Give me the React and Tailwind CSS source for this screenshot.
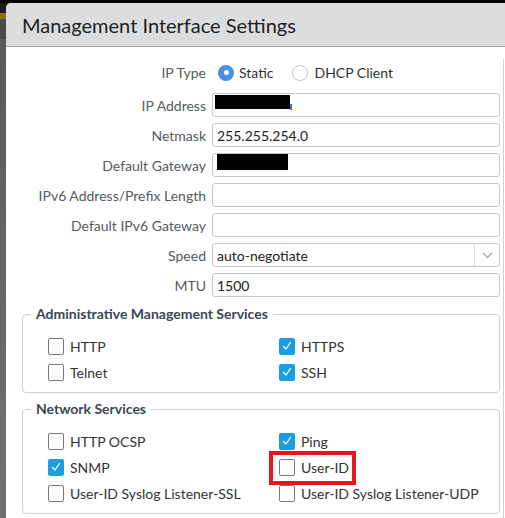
import React from 'react';

const Check = () => (
    <svg width="12" height="12" viewBox="0 0 12 12" fill="none">
        <path d="M2.5 6.5 L5 9 L9.5 2.5" stroke="white" strokeWidth="1.3" strokeLinecap="round" strokeLinejoin="round" />
    </svg>
);

const Box = ({ checked }) =>
    checked ? (
        <span className="w-[16px] h-[17px] rounded-[2px] bg-[#1c9de2] flex items-center justify-center shrink-0">
            <Check />
        </span>
    ) : (
        <span className="w-[16px] h-[17px] rounded-[2px] border-[1.5px] border-[#7b7b7b] bg-white shrink-0"></span>
    );

const CheckItem = ({ label, checked, marked }) => (
    <div className="relative h-[26px] flex items-center gap-[6px]">
        <Box checked={checked} />
        <span className="text-[14px] text-[#333]">{label}</span>
        {marked && (
            <span className="absolute left-[-10px] top-[-3px] w-[87px] h-[34px] border-[4px] border-[#e8141f]"></span>
        )}
    </div>
);

const Group = ({ title, items, className = '' }) => (
    <fieldset className={`border border-[#cfcfcf] rounded-[4px] ${className}`}>
        <legend className="ml-[8px] px-[5px] text-[14px] font-bold text-[#3d4651] leading-[16px]">{title}</legend>
        <div className="grid grid-cols-[231px_1fr] pl-[25px] pt-[11px] pb-[7px]">
            {items.map((it) => (
                <CheckItem key={it.label} {...it} />
            ))}
        </div>
    </fieldset>
);

const Field = ({ children }) => (
    <div className="h-[24px] border border-[#c8c8c8] rounded-[3px] bg-white flex items-center text-[14px] text-[#222]">
        {children}
    </div>
);

const Label = ({ children, className = '' }) => (
    <div className={`flex items-center justify-end text-[14px] text-[#555a60] ${className}`}>{children}</div>
);

const App = () => {
    const admin = [
        { label: 'HTTP' },
        { label: 'HTTPS', checked: true },
        { label: 'Telnet' },
        { label: 'SSH', checked: true },
    ];
    const network = [
        { label: 'HTTP OCSP' },
        { label: 'Ping', checked: true },
        { label: 'SNMP', checked: true },
        { label: 'User-ID', marked: true },
        { label: 'User-ID Syslog Listener-SSL' },
        { label: 'User-ID Syslog Listener-UDP' },
    ];

    return (
        <div className="w-[505px] h-[518px] overflow-hidden flex flex-col bg-black font-['Lato',sans-serif]">
            <div className="h-[3px] shrink-0"></div>
            <div className="flex flex-1 min-h-0">
                {/* backdrop strip */}
                <div className="w-[6px] shrink-0 flex flex-col">
                    <div className="h-[10px] bg-[#1b1b1b]"></div>
                    <div className="h-[6px] bg-[#8a6e12]"></div>
                    <div className="h-[20px] bg-[#4a4a4a]"></div>
                    <div className="flex-1 bg-gradient-to-b from-[#5a5a5a] to-[#727272]"></div>
                </div>

                {/* dialog */}
                <div className="flex-1 flex flex-col bg-white rounded-tl-[5px] overflow-hidden">
                    <div className="h-[44px] shrink-0 bg-[#dcdddf] border-b border-[#a8a8a8] flex items-center pl-[16px]">
                        <h2 className="text-[20px] text-[#1f1f1f]">Management Interface Settings</h2>
                    </div>

                    <div className="flex flex-1">
                        <div className="flex-1 mr-[3px] pt-[14px]">
                            <div className="grid grid-cols-[200px_1fr] gap-x-[6px] gap-y-[6px]">
                                <Label className="pb-[4px]">IP Type</Label>
                                <div className="h-[26px] pb-[3px] flex items-center text-[14px] text-[#333]">
                                    <span className="w-[16px] h-[16px] rounded-full bg-[#4a90e2] flex items-center justify-center ml-[6px]">
                                        <span className="w-[5px] h-[5px] rounded-full bg-white"></span>
                                    </span>
                                    <span className="ml-[5px]">Static</span>
                                    <span className="w-[16px] h-[16px] rounded-full border border-[#c4c4c4] ml-[19px]"></span>
                                    <span className="ml-[6px]">DHCP Client</span>
                                </div>

                                <Label>IP Address</Label>
                                <Field>
                                    <span className="self-start mt-[1px] ml-[2px] w-[75px] h-[14px] bg-black"></span>
                                    <span className="w-[2px] h-[6px] bg-[#3a6fd8] mt-[3px]"></span>
                                </Field>

                                <Label>Netmask</Label>
                                <Field>
                                    <span className="pl-[4px]">255.255.254.0</span>
                                </Field>

                                <Label>Default Gateway</Label>
                                <Field>
                                    <span className="self-start ml-[4px] w-[71px] h-[16px] bg-black"></span>
                                </Field>

                                <Label>IPv6 Address/Prefix Length</Label>
                                <Field />

                                <Label>Default IPv6 Gateway</Label>
                                <Field />

                                <Label>Speed</Label>
                                <Field>
                                    <span className="pl-[4px] flex-1">auto-negotiate</span>
                                    <span className="w-[25px] h-full border-l border-[#dedede] flex items-center justify-center">
                                        <svg width="11" height="7" viewBox="0 0 11 7" fill="none">
                                            <path d="M1 1 L5.5 5.5 L10 1" stroke="#9a9a9a" strokeWidth="1.1" />
                                        </svg>
                                    </span>
                                </Field>

                                <Label>MTU</Label>
                                <Field>
                                    <span className="pl-[4px]">1500</span>
                                </Field>
                            </div>

                            <div className="pl-[16px] mt-[9px] flex flex-col gap-[8px]">
                                <Group title="Administrative Management Services" items={admin} />
                                <Group title="Network Services" items={network} />
                            </div>
                        </div>
                        <div className="w-[2px] mt-[12px] border-l border-[#d0d0d0]"></div>
                    </div>
                </div>
            </div>
        </div>
    );
};

export default App;
